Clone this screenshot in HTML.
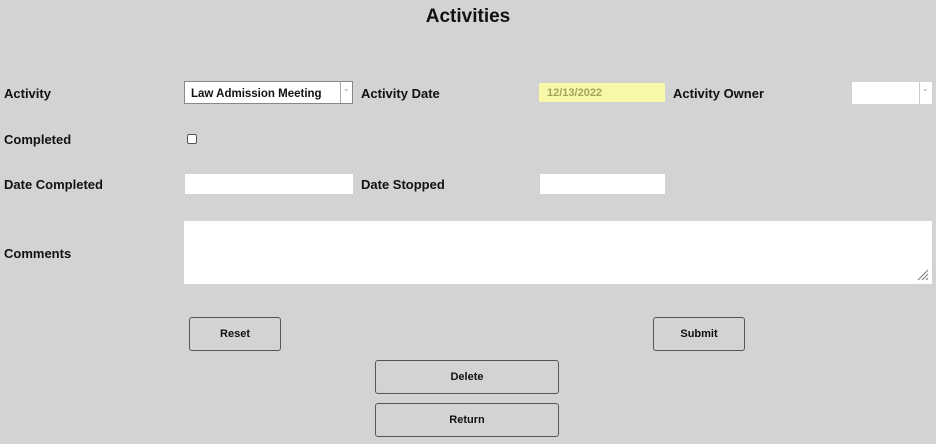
<!DOCTYPE html>
<html><head><meta charset="utf-8"><style>
body{margin:0;width:936px;height:444px;background:#d3d3d3;font-family:"Liberation Sans",sans-serif;position:relative;overflow:hidden}
.a{position:absolute}
.l{font-weight:bold;font-size:13px;color:#111}
.box{background:#fff;position:absolute}
.btn{position:absolute;border:1px solid #555;border-radius:3px;background:#d3d3d3;font-weight:bold;font-size:11px;text-align:center;box-sizing:border-box;color:#111}
</style></head><body>
<div class="a" style="left:0;width:936px;top:6px;text-align:center;font-weight:bold;font-size:19px;color:#111">Activities</div>
<div class="a l" style="left:4px;top:86px">Activity</div>
<div class="box" style="left:184px;top:81px;width:169px;height:23px;border:1px solid #888;box-sizing:border-box"></div>
<div class="a" style="left:191px;top:88px;font-size:11.5px;color:#111;font-weight:bold">Law Admission Meeting</div>
<div class="a" style="left:340px;top:82px;width:1px;height:21px;background:#aaa"></div>
<div class="a" style="left:343px;top:84px;font-size:8px;color:#999">⌄</div>
<div class="a l" style="left:361px;top:86px">Activity Date</div>
<div class="a" style="left:539px;top:83px;width:126px;height:19px;background:#f8f8a8"></div>
<div class="a" style="left:547px;top:87px;font-size:11px;color:#a3a35a;font-weight:bold">12/13/2022</div>
<div class="a l" style="left:673px;top:86px">Activity Owner</div>
<div class="box" style="left:852px;top:82px;width:80px;height:22px"></div>
<div class="a" style="left:919px;top:82px;width:1px;height:22px;background:#ccc"></div>
<div class="a" style="left:922px;top:84px;font-size:8px;color:#999">⌄</div>
<div class="a l" style="left:4px;top:132px">Completed</div>
<div class="a" style="left:187px;top:134px;width:8px;height:8px;border:1px solid #555;border-radius:2px;background:#fff"></div>
<div class="a l" style="left:4px;top:177px">Date Completed</div>
<div class="box" style="left:185px;top:174px;width:168px;height:20px"></div>
<div class="a l" style="left:361px;top:177px">Date Stopped</div>
<div class="box" style="left:540px;top:174px;width:125px;height:20px"></div>
<div class="a l" style="left:4px;top:246px">Comments</div>
<div class="box" style="left:184px;top:221px;width:748px;height:63px"></div>
<svg class="a" style="left:917px;top:269px" width="12" height="12"><path d="M11 1L1 11M11 5L5 11M11 9L9 11" stroke="#777" stroke-width="1"/></svg>
<div class="btn" style="left:189px;top:317px;width:92px;height:34px;line-height:32px">Reset</div>
<div class="btn" style="left:653px;top:317px;width:92px;height:34px;line-height:32px">Submit</div>
<div class="btn" style="left:375px;top:360px;width:184px;height:34px;line-height:32px">Delete</div>
<div class="btn" style="left:375px;top:403px;width:184px;height:34px;line-height:32px">Return</div>
</body></html>
